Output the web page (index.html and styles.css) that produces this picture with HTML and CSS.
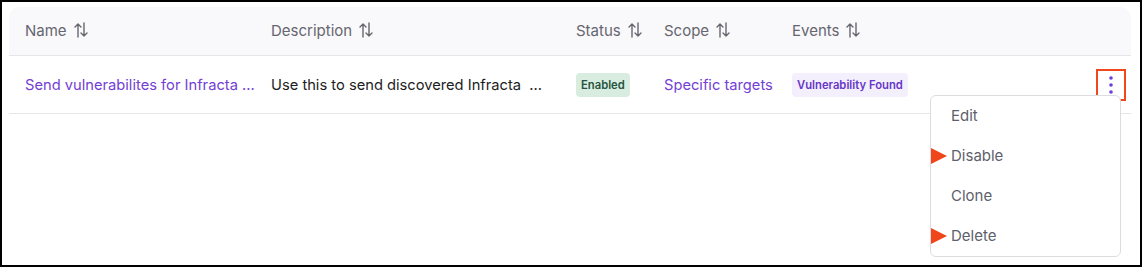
FILE: index.html
```html
<!DOCTYPE html>
<html lang="en">
<head>
    <meta charset="UTF-8">
    <meta name="viewport" content="width=device-width, initial-scale=1.0">
    <title>Integrations</title>
    <link rel="stylesheet" href="styles.css">
</head>
<body>
    <div class="frame">
        <div class="table">
            <!-- header -->
            <div class="row head">
                <div class="cell">Name <svg class="sort" width="14" height="16" viewBox="0 0 14 16"><path d="M4 15V2M1 5l3-3 3 3M10 1v13M7 11l3 3 3-3"/></svg></div>
                <div class="cell">Description <svg class="sort" width="14" height="16" viewBox="0 0 14 16"><path d="M4 15V2M1 5l3-3 3 3M10 1v13M7 11l3 3 3-3"/></svg></div>
                <div class="cell">Status <svg class="sort" width="14" height="16" viewBox="0 0 14 16"><path d="M4 15V2M1 5l3-3 3 3M10 1v13M7 11l3 3 3-3"/></svg></div>
                <div class="cell">Scope <svg class="sort" width="14" height="16" viewBox="0 0 14 16"><path d="M4 15V2M1 5l3-3 3 3M10 1v13M7 11l3 3 3-3"/></svg></div>
                <div class="cell">Events <svg class="sort" width="14" height="16" viewBox="0 0 14 16"><path d="M4 15V2M1 5l3-3 3 3M10 1v13M7 11l3 3 3-3"/></svg></div>
                <div class="cell"></div>
            </div>

            <!-- rows -->
            <div class="row body">
                <div class="cell"><a class="link" href="#">Send vulnerabilites for Infracta ...</a></div>
                <div class="cell">Use this to send discovered Infracta &nbsp;...</div>
                <div class="cell"><span class="badge enabled">Enabled</span></div>
                <div class="cell"><a class="link" href="#">Specific targets</a></div>
                <div class="cell"><span class="badge event">Vulnerability Found</span></div>
                <div class="cell actions">
                    <button class="kebab" aria-label="More">
                        <svg width="6" height="20" viewBox="0 0 6 20">
                            <circle cx="3" cy="3" r="1.8" fill="#6f3fd0"/>
                            <circle cx="3" cy="10" r="1.8" fill="#6f3fd0"/>
                            <circle cx="3" cy="17" r="1.8" fill="#6f3fd0"/>
                        </svg>
                    </button>
                    <ul class="menu">
                        <li>Edit</li>
                        <li class="marked">Disable</li>
                        <li>Clone</li>
                        <li class="marked">Delete</li>
                    </ul>
                </div>
            </div>
        </div>
    </div>
</body>
</html>
```

FILE: styles.css
```css
* {
    box-sizing: border-box;
}
html, body {
    margin: 0;
    padding: 0;
    height: 100%;
}
body {
    font-family: Inter, 'Noto Sans', sans-serif;
    font-size: 15px;
    color: #1d1d22;
    background: #fff;
}
.frame {
    height: 267px;
    border: 2px solid #000;
    padding: 5px 9px 0 7px;
}
.row {
    display: grid;
    grid-template-columns: 246px 305px 88px 128px 300px 1fr;
    align-items: center;
}
.cell {
    padding-left: 16px;
    white-space: nowrap;
}
.head {
    height: 49px;
    background: #f9f9fb;
    border-radius: 10px 10px 0 0;
    border-bottom: 1px solid #e6e6ea;
    color: #66666f;
    padding-bottom: 2px;
}
.head .cell {
    display: flex;
    align-items: center;
}
.sort {
    margin-left: 7px;
    fill: none;
    stroke: #66666f;
    stroke-width: 1.4;
    stroke-linecap: round;
    stroke-linejoin: round;
}
.body {
    height: 58px;
    border-bottom: 1px solid #e6e6ea;
    font-size: 14.7px;
}
.link {
    color: #7440d4;
    text-decoration: none;
}
.badge {
    display: inline-block;
    font-size: 11.25px;
    font-weight: 600;
    padding: 5px 5px;
    border-radius: 4px;
}
.enabled {
    background: #d8ede0;
    color: #25543e;
}
.event {
    background: #f3effd;
    color: #6636c8;
}
.actions {
    position: relative;
    display: flex;
    justify-content: flex-end;
    padding-right: 5px;
}
.kebab {
    width: 30px;
    height: 32px;
    border: 2px solid #f0471f;
    background: #fff;
    padding: 0;
    display: flex;
    align-items: center;
    justify-content: center;
    cursor: pointer;
}
.menu {
    position: absolute;
    top: 26px;
    right: 10px;
    width: 191px;
    margin: 0;
    padding: 0;
    list-style: none;
    background: #fff;
    border: 1px solid #dcdce0;
    border-radius: 6px;
    z-index: 2;
}
.menu li {
    position: relative;
    height: 40px;
    line-height: 40px;
    padding-left: 20px;
    color: #5e5f6b;
    font-size: 15px;
}
.menu li.marked::before {
    content: '';
    position: absolute;
    left: 0;
    top: 12px;
    border-top: 8px solid transparent;
    border-bottom: 8px solid transparent;
    border-left: 16px solid #f0461c;
}
```
